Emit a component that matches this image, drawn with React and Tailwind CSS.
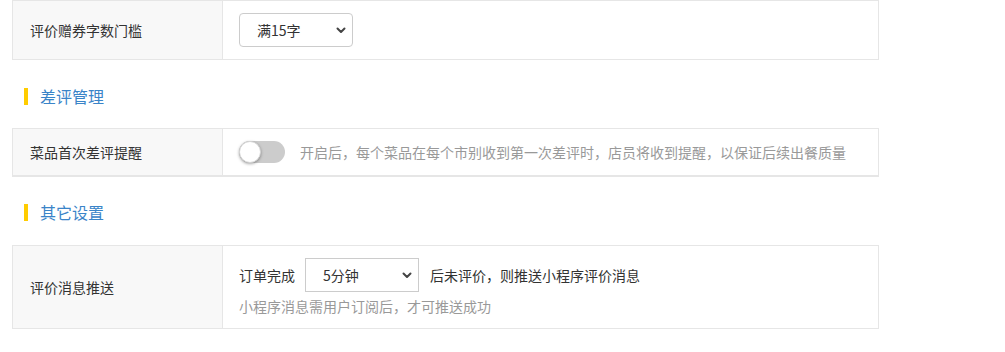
function Chevron() {
  return (
    <svg width="10" height="7" viewBox="0 0 10 7" className="shrink-0">
      <path d="M1.5 1.5 L5 5 L8.5 1.5" fill="none" stroke="#444" strokeWidth="2" strokeLinecap="round" strokeLinejoin="round" />
    </svg>
  );
}

function FakeSelect({ value, rounded }) {
  return (
    <div
      className={`w-[114px] h-[34px] border border-[#cccccc] bg-white flex items-center justify-between pl-[17px] pr-[6px] text-[14px] text-[#333] ${rounded ? 'rounded-[4px]' : ''}`}
    >
      <span>{value}</span>
      <Chevron />
    </div>
  );
}

function Toggle() {
  return (
    <div className="relative w-[46px] h-[22px] rounded-full bg-[#cccccc] shrink-0">
      <div className="absolute left-0 top-0 w-[22px] h-[22px] rounded-full bg-white border border-[#d6d6d6] shadow-[0_1px_3px_rgba(0,0,0,0.35)]" />
    </div>
  );
}

function SectionTitle({ children, className }) {
  return (
    <div className={`flex items-center pl-[24px] ${className}`}>
      <span className="w-[4px] h-[17px] bg-[#ffcc00]" />
      <span className="ml-[12px] text-[16px] leading-[17px] text-[#3a84c8]">{children}</span>
    </div>
  );
}

function Row({ label, children, className, bodyClass }) {
  return (
    <div className={`ml-[12px] w-[867px] flex border border-[#e6e6e6] ${className}`}>
      <div className="w-[210px] shrink-0 bg-[#f8f8f8] border-r border-[#e6e6e6] flex items-center pl-[17px] text-[14px] text-[#333]">
        {label}
      </div>
      <div className={`flex-1 pl-[16px] ${bodyClass}`}>{children}</div>
    </div>
  );
}

export default function App() {
  return (
    <div className="w-[1005px] h-[352px] bg-white font-['Noto_Sans_CJK_SC','Microsoft_YaHei',sans-serif] overflow-hidden">
      {/* 评价赠券 */}
      <Row label="评价赠券字数门槛" className="h-[60px]" bodyClass="flex items-center">
        <FakeSelect value="满15字" rounded />
      </Row>

      <SectionTitle className="mt-[28px] mb-[23px]">差评管理</SectionTitle>

      <Row label="菜品首次差评提醒" className="h-[49px] border-b-2" bodyClass="flex items-center">
        <Toggle />
        <span className="ml-[15px] text-[14px] text-[#999]">
          开启后，每个菜品在每个市别收到第一次差评时，店员将收到提醒，以保证后续出餐质量
        </span>
      </Row>

      <SectionTitle className="mt-[27px] mb-[24px]">其它设置</SectionTitle>

      <Row label="评价消息推送" className="h-[84px]" bodyClass="pt-[12px]">
        <div className="flex items-center text-[14px] text-[#333]">
          <span>订单完成</span>
          <div className="ml-[10px]">
            <FakeSelect value="5分钟" />
          </div>
          <span className="ml-[11px]">后未评价，则推送小程序评价消息</span>
        </div>
        <div className="mt-[4px] text-[14px] leading-[20px] text-[#999]">
          小程序消息需用户订阅后，才可推送成功
        </div>
      </Row>
    </div>
  );
}
